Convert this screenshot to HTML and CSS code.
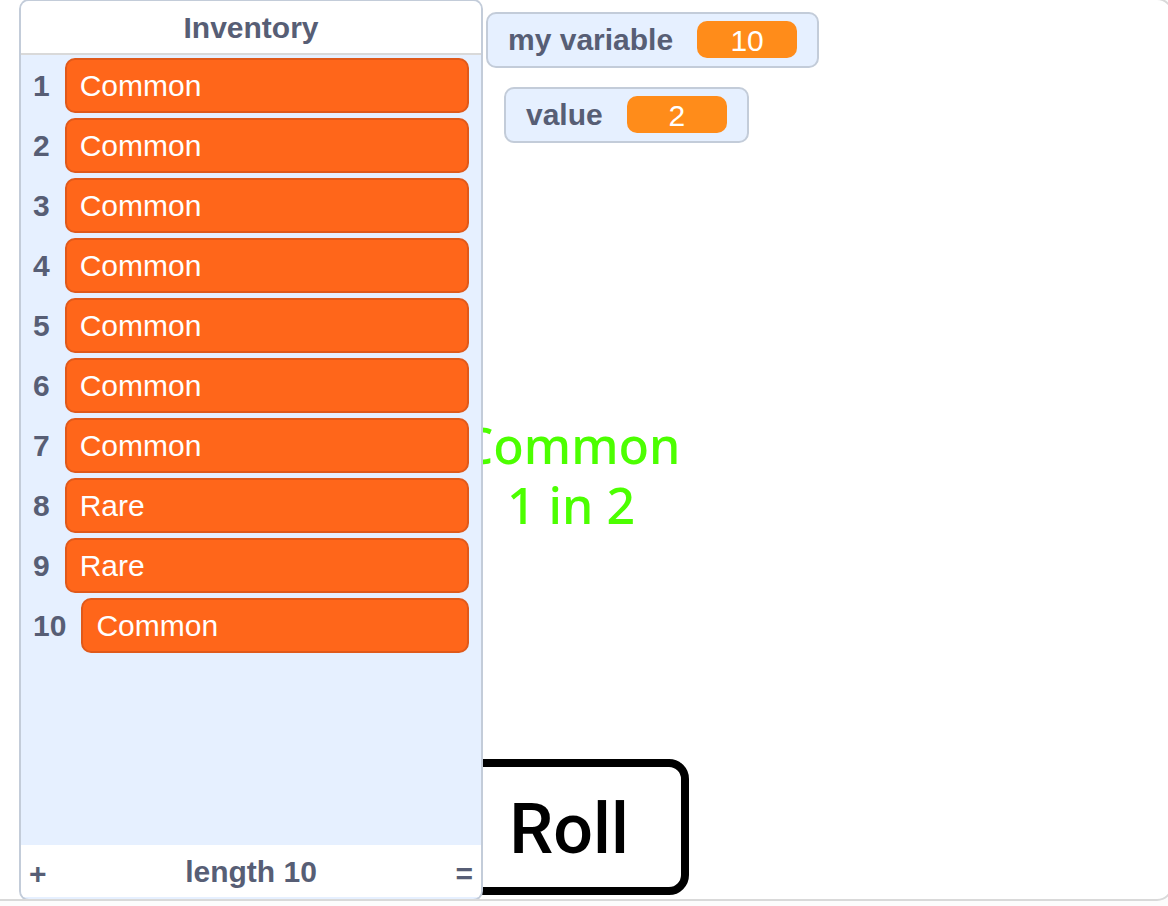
FILE: index.html
```html
<!DOCTYPE html>
<html lang="en">
<head>
<meta charset="utf-8">
<title>Roll</title>
<link rel="stylesheet" href="styles.css">
</head>
<body>
<main class="stage">
  <div class="result">Common<br>1 in 2</div>
  <button class="roll" type="button">Roll</button>

  <div class="monitor monitor-variable">
    <span class="monitor-label">my variable</span>
    <span class="monitor-value">10</span>
  </div>
  <div class="monitor monitor-rarity">
    <span class="monitor-label">value</span>
    <span class="monitor-value">2</span>
  </div>

  <section class="list" aria-labelledby="list-title">
    <h2 class="list-header" id="list-title">Inventory</h2>
    <div class="list-body">
      <div class="row"><span class="index">1</span><span class="item">Common</span></div>
      <div class="row"><span class="index">2</span><span class="item">Common</span></div>
      <div class="row"><span class="index">3</span><span class="item">Common</span></div>
      <div class="row"><span class="index">4</span><span class="item">Common</span></div>
      <div class="row"><span class="index">5</span><span class="item">Common</span></div>
      <div class="row"><span class="index">6</span><span class="item">Common</span></div>
      <div class="row"><span class="index">7</span><span class="item">Common</span></div>
      <div class="row"><span class="index">8</span><span class="item">Rare</span></div>
      <div class="row"><span class="index">9</span><span class="item">Rare</span></div>
      <div class="row"><span class="index">10</span><span class="item">Common</span></div>
    </div>
    <div class="list-footer">
      <button class="footer-button" type="button" aria-label="Add item">+</button>
      <span class="length">length 10</span>
      <button class="footer-button" type="button" aria-label="Resize list">=</button>
    </div>
  </section>
</main>
</body>
</html>
```
FILE: styles.css
```css
* {
  box-sizing: border-box;
}

body {
  display: flex;
  height: 100vh;
  margin: 0;
  overflow: hidden;
  background: #fcfcfc;
  color: #575e75;
  font-family: "Liberation Sans", Arial, sans-serif;
  font-size: 30px;
  line-height: 36px;
}

button {
  margin: 0;
  font: inherit;
  color: inherit;
  cursor: pointer;
}

.stage {
  position: relative;
  flex: 1;
  height: calc(100vh - 3px);
  margin: -2px -5px 0 -16px;
  overflow: hidden;
  border: 2px solid #d9d9d9;
  border-radius: 16px;
  background: #fff;
}

.result {
  position: absolute;
  top: 415px;
  left: 465px;
  width: 240px;
  color: #4cff00;
  font-family: "Noto Sans", sans-serif;
  font-size: 50px;
  font-weight: 500;
  line-height: 60px;
  text-align: center;
}

.roll {
  position: absolute;
  top: 759px;
  left: 463px;
  width: 240px;
  height: 136px;
  padding: 4px 0 0;
  border: 8px solid #000;
  border-radius: 20px;
  background: #fff;
  color: #000;
  font-family: Roboto, sans-serif;
  font-size: 70px;
  font-weight: 500;
  line-height: 80px;
}

.monitor {
  position: absolute;
  display: flex;
  align-items: center;
  gap: 24px;
  height: 56px;
  padding: 0 20px 2px;
  border: 2px solid #c3ccd9;
  border-radius: 10px;
  background: #e6f0ff;
  white-space: nowrap;
}

.monitor-variable {
  top: 12px;
  left: 500px;
}

.monitor-rarity {
  top: 87px;
  left: 518px;
}

.monitor-label {
  padding-top: 2px;
  font-weight: 700;
}

.monitor-value {
  width: 100px;
  height: 37px;
  border-radius: 10px;
  background: #ff8c1a;
  color: #fff;
  line-height: 40px;
  text-align: center;
}

.list {
  position: absolute;
  top: -1px;
  bottom: -2px;
  left: 33px;
  display: flex;
  flex-direction: column;
  width: 464px;
  padding-bottom: 2px;
  overflow: hidden;
  border: 2px solid #c3ccd9;
  border-radius: 10px;
  background: #e6f0ff;
}

.list-header {
  margin: 0;
  padding: 9px 0 7px;
  border-bottom: 2px solid #d9d9d9;
  background: #fff;
  font-size: 30px;
  text-align: center;
}

.list-body {
  display: flex;
  flex: 1;
  flex-direction: column;
  gap: 5px;
  padding: 3px 12px;
}

.row {
  display: flex;
  align-items: center;
  gap: 15px;
}

.index {
  font-weight: 700;
}

.item {
  flex: 1;
  height: 55px;
  padding: 0 13px;
  border: 2px solid #e0591a;
  border-radius: 10px;
  background: #ff661a;
  color: #fff;
  line-height: 51px;
}

.list-footer {
  display: flex;
  align-items: center;
  justify-content: space-between;
  height: 52px;
  padding: 2px 8px 0;
  background: #fff;
  font-weight: 700;
}

.footer-button {
  padding: 4px 0 0;
  border: 0;
  background: none;
}
```
